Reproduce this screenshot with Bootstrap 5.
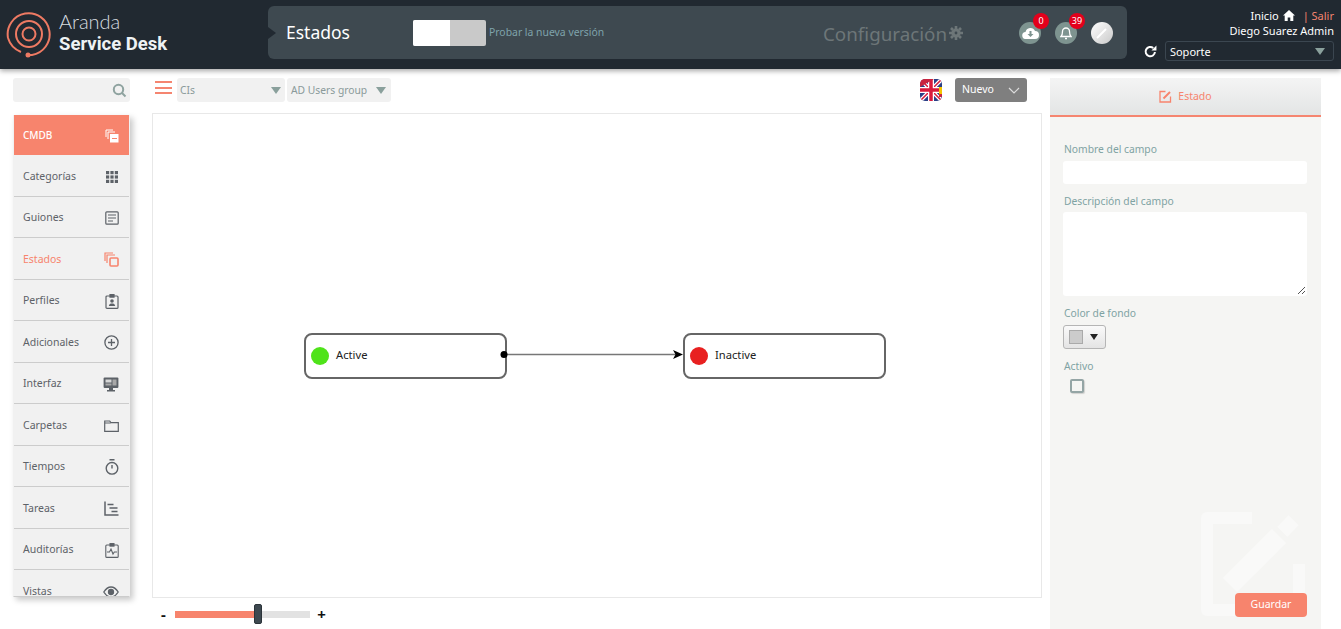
<!DOCTYPE html>
<html lang="es">
<head>
<meta charset="utf-8">
<title>Estados</title>
<link href="https://cdn.jsdelivr.net/npm/bootstrap@5.3.0/dist/css/bootstrap.min.css" rel="stylesheet">
<style>
html,body{height:100%;}
body{margin:0;overflow:hidden;background:#fff;font-family:"Noto Sans","Open Sans",sans-serif;font-size:11px;color:#555;}
.top-bar{height:69px;background:#212931;box-shadow:0 2px 5px rgba(0,0,0,.35);position:relative;z-index:5;padding-left:6px;}
.logo-box{width:262px;gap:7px;}
.logo-text{color:#fff;padding-bottom:5px;}
.logo-a{font-size:20px;line-height:23px;font-weight:300;color:#d8dde0;font-family:Lato,"Open Sans",sans-serif;}
.logo-b{font-size:18.5px;line-height:22px;font-weight:700;font-family:Roboto,"Noto Sans",sans-serif;color:#eef2f4;}
.title-panel{width:859px;height:53px;margin-top:6px;background:#3e4950;border-radius:6px;position:relative;padding-left:18px;}
.title-panel::before{content:"";position:absolute;left:0;top:21px;border-left:8px solid #212931;border-top:6px solid transparent;border-bottom:6px solid transparent;}
.title-text{font-size:17.5px;color:#fff;width:127px;}
.toggle-box{width:73px;height:26px;border-radius:2px;overflow:hidden;background:#c9c9c9;}
.toggle-on{width:37px;background:#fff;}
.try-text{font-size:10.4px;color:#7fa3ab;margin-left:3px;width:334px;}
.config-text{font-size:18.8px;color:#6d7678;width:126px;padding-top:4px;}
.round-icon{width:22px;height:22px;border-radius:50%;background:#7e9490;position:relative;}
.icon-slot{margin-left:14px;}
.icon-first{margin-left:56px;}
.round-white{background:linear-gradient(135deg,#fff,#c9c9c9);}
.red-badge{position:absolute;top:-9px;left:14px;min-width:16px;height:16px;border-radius:50%;background:#e3001b;color:#fff;font-size:9px;line-height:16px;text-align:center;}
.user-box{width:190px;margin-left:17px;padding-top:8px;color:#fff;text-align:right;line-height:15px;}
.user-box .sep{color:#f58570;}
.role-select{width:170px;height:20px;border:1px solid #3b4650;border-radius:3px;padding-left:4px;font-size:11px;text-align:left;line-height:19px;}
.tri{width:0;height:0;border-left:5px solid transparent;border-right:5px solid transparent;border-top:7px solid #8aa09c;}
.role-row{margin-top:3px;}
.content-area{height:560px;}
.side-col{width:117px;margin-left:13px;padding-top:9px;}
.search-box{height:24px;background:#f1f1f1;border-radius:3px;padding-right:3px;}
.menu-wrap{margin-top:13px;height:482px;overflow:hidden;box-shadow:3px 3px 6px rgba(0,0,0,.22);background:#f1f1f1;border-left:1px solid #f1f1f1;border-right:1px solid #f1f1f1;border-bottom:1px solid #ccc;width:117px;}
.menu-line{height:41.5px;border-bottom:1.5px solid #ccc;padding:3px 10px 0 9px;color:#5d6268;font-size:10.5px;}
.menu-line.is-head{background:#f7846d;color:#fff;font-weight:500;height:40px;border-bottom:0;font-size:10px;padding-top:1px;}
.menu-line.is-active{color:#f7846d;}
.main-col{width:890px;margin-left:22px;padding-top:9px;}
.tool-row{height:24px;}
.burger{width:17px;margin:3px 5px 0 3px;height:13px;border-top:2px solid #f58570;border-bottom:2px solid #f58570;position:relative;align-self:flex-start;}
.burger::after{content:"";position:absolute;left:0;right:0;top:3.5px;height:2px;background:#f58570;}
.gray-select{height:24px;background:#f1f1f1;border-radius:3px;padding:1px 4px 0 3px;color:#8a9a9a;font-size:10.3px;margin-right:2px;}
.sel-a{width:108px;}
.sel-b{width:104px;padding-left:4px;padding-right:5px;}
.flag-box{width:22px;height:22px;border-radius:5px;overflow:hidden;margin-right:13px;}
.new-btn{width:72px;height:24px;background:#7f7f7f;border-radius:3px;color:#fff;font-size:10.5px;padding:0 7px;margin-right:15px;}
.canvas-box{height:485px;margin-top:11px;border:1px solid #e8e8e8;position:relative;}
.node-box{position:absolute;top:219px;width:202.5px;height:45.5px;border:2px solid #666;border-radius:8px;background:#fff;padding-left:5px;gap:7px;color:#222;font-size:11.2px;}
.node-dot{width:18px;height:18px;border-radius:50%;}
.link-svg{position:absolute;left:0;top:0;}
.zoom-row{height:33px;}
.zoom-sign{width:23px;text-align:center;color:#111;font-size:15px;font-weight:700;}
.zoom-track{width:135px;height:7px;background:#e2e2e2;position:relative;}
.zoom-fill{height:7px;background:#f7846d;}
.zoom-thumb{position:absolute;top:-7px;left:79px;width:8px;height:20px;background:#3e4950;border:1px solid #2c343a;border-radius:2px;}
.right-col{width:271px;margin-left:8px;margin-top:9px;background:#f5f5f3;position:relative;padding:0 14px 0 13px;}
.right-head{height:39px;margin:0 -14px 0 -13px;background:linear-gradient(#f4f4f4,#e3e5e5);border-bottom:2px solid #f58570;color:#f7846d;gap:6px;font-size:10.5px;}
.field-label{color:#7fa3a3;font-size:10.3px;line-height:14px;margin-left:1px;}
.field-input{height:23px;background:#fff;border-radius:3px;margin-top:5px;}
.field-area{height:84px;background:#fff;border-radius:3px;position:relative;margin-top:4px;}
.grip{position:absolute;right:1px;bottom:1px;}
.picker{width:43px;height:24px;border:1px solid #b5b5b5;border-radius:3px;background:linear-gradient(#fafafa,#e4e4e4);gap:7px;padding-left:5px;margin-top:5px;}
.swatch{width:14px;height:14px;background:#ccc;border:1px solid #aaa;}
.tri-dark{width:0;height:0;border-left:4px solid transparent;border-right:4px solid transparent;border-top:6px solid #222;}
.check-box{width:14px;height:14px;border:2px solid #94a5a5;border-radius:2px;background:#f5f5f3;margin:6px 0 0 7px;box-shadow:1px 1px 1px rgba(0,0,0,.15);}
.save-btn{position:absolute;right:14px;bottom:12px;width:72px;height:24px;background:#f7846d;border:0;border-radius:4px;color:#fff;font-size:10.5px;padding:0;}
.mark-icon{position:absolute;left:151px;top:434px;}
.lab-first{margin-top:25px;}
.lab-next{margin-top:10px;}
.lab-last{margin-top:10px;}
</style>
</head>
<body>
<header class="top-bar d-flex">
  <div class="logo-box d-flex align-items-center">
    <svg width="46" height="50" viewBox="0 0 46 50" fill="none" stroke="#ee7a63">
      <circle cx="23" cy="24" r="6.500" stroke-width="2"/>
      <circle cx="23" cy="24" r="13" stroke-width="2"/>
      <path d="M2 28 A21 21 0 1 1 26 45 L22 45" stroke-width="2"/>
      <path d="M2 28 Q5 38 15 42" stroke-width="2"/>
      <circle cx="22" cy="45" r="2.500" fill="#ee7a63" stroke="none"/>
    </svg>
    <div class="logo-text">
      <div class="logo-a">Aranda</div>
      <div class="logo-b">Service Desk</div>
    </div>
  </div>
  <div class="title-panel d-flex align-items-center">
    <div class="title-text">Estados</div>
    <div class="toggle-box d-flex"><div class="toggle-on"></div></div>
    <div class="try-text">Probar la nueva versión</div>
    <div class="config-text">Configuración</div>
    <svg width="14" height="14" viewBox="0 0 14 14"><circle cx="7" cy="7" r="4.600" fill="#6d7678"/><circle cx="7" cy="7" r="1.400" fill="#3e4950"/><path d="M7 0v3M7 11v3M0 7h3M11 7h3M2 2l2 2M10 10l2 2M12 2l-2 2M4 10l-2 2" stroke="#6d7678" stroke-width="2.600"/></svg>
    <div class="round-icon icon-first d-flex align-items-center justify-content-center">
      <svg width="17" height="12" viewBox="0 0 17 12"><path d="M4 12a3.500 3.500 0 0 1-.5-7A5 5 0 0 1 13 4a4 4 0 0 1 0 8z" fill="#fff"/><path d="M7.500 4h2v3h2l-3 3-3-3h2z" fill="#7e9490"/></svg>
      <span class="red-badge">0</span>
    </div>
    <div class="round-icon icon-slot d-flex align-items-center justify-content-center">
      <svg width="12" height="14" viewBox="0 0 12 14" fill="none" stroke="#fff" stroke-width="1.300"><path d="M1 10.500c1.300-1.300 1.500-2.500 1.500-5a3.500 3.500 0 0 1 7 0c0 2.500.2 3.700 1.500 5z"/><path d="M5 12.500h2"/></svg>
      <span class="red-badge">39</span>
    </div>
    <div class="round-icon round-white icon-slot d-flex align-items-center justify-content-center">
      <svg width="12" height="12" viewBox="0 0 12 12"><path d="M1 11 10 2" stroke="#fff" stroke-width="2"/></svg>
    </div>
  </div>
  <div class="user-box">
    <div class="d-flex justify-content-end align-items-center gap-1">
      <span>Inicio</span>
      <svg width="12" height="11" viewBox="0 0 12 11"><path d="M6 0 0 5.500h1.700V11h3V7.500h2.600V11h3V5.500H12z" fill="#fff"/></svg>
      <span class="sep ms-1">|&nbsp;Salir</span>
    </div>
    <div>Diego Suarez Admin</div>
    <div class="role-row d-flex justify-content-end align-items-center gap-2">
      <svg width="13" height="13" viewBox="0 0 13 13" fill="none" stroke="#fff" stroke-width="2"><path d="M11 7A4.700 4.700 0 1 1 9.300 3"/><path d="M12.500 .5v5h-5z" fill="#fff" stroke="none"/></svg>
      <div class="role-select d-flex align-items-center justify-content-between pe-2">Soporte<span class="tri"></span></div>
    </div>
  </div>
</header>
<div class="content-area d-flex">
  <aside class="side-col">
    <div class="search-box d-flex align-items-center justify-content-end">
      <svg width="15" height="15" viewBox="0 0 15 15" fill="none" stroke="#8fa3a0" stroke-width="2"><circle cx="6.500" cy="6.500" r="4.700"/><path d="m10 10 3.500 3.500"/></svg>
    </div>
    <nav class="menu-wrap">
      <div class="menu-line is-head d-flex align-items-center justify-content-between">CMDB
        <svg width="14" height="14" viewBox="0 0 14 14" fill="none" stroke="#fff"><path d="M1 8V1h7"/><path d="M3 10V3h7"/><rect x="5" y="5" width="8.500" height="8.500" fill="#fff" stroke="none"/><path d="M7 9.500h5" stroke="#f7846d"/></svg>
      </div>
      <div class="menu-line d-flex align-items-center justify-content-between">Categorías
        <svg width="14" height="14" viewBox="0 0 14 14" fill="#5d6268"><rect x="1" y="1" width="3.200" height="3.200"/><rect x="5.400" y="1" width="3.200" height="3.200"/><rect x="9.800" y="1" width="3.200" height="3.200"/><rect x="1" y="5.400" width="3.200" height="3.200"/><rect x="5.400" y="5.400" width="3.200" height="3.200"/><rect x="9.800" y="5.400" width="3.200" height="3.200"/><rect x="1" y="9.800" width="3.200" height="3.200"/><rect x="5.400" y="9.800" width="3.200" height="3.200"/><rect x="9.800" y="9.800" width="3.200" height="3.200"/></svg>
      </div>
      <div class="menu-line d-flex align-items-center justify-content-between">Guiones
        <svg width="14" height="14" viewBox="0 0 14 14" fill="none" stroke="#5d6268" stroke-width="1.200"><rect x=".8" y=".8" width="12.400" height="12.400" rx="1"/><path d="M3 4h8M3 7h8M3 10h5"/></svg>
      </div>
      <div class="menu-line is-active d-flex align-items-center justify-content-between">Estados
        <svg width="15" height="15" viewBox="0 0 15 15" fill="none" stroke="#f7846d" stroke-width="1.200"><path d="M1 9V1h8"/><path d="M3 11V3h8"/><rect x="6" y="6" width="8" height="8" rx="1" stroke-width="1.600"/></svg>
      </div>
      <div class="menu-line d-flex align-items-center justify-content-between">Perfiles
        <svg width="14" height="15" viewBox="0 0 14 15" fill="none" stroke="#5d6268" stroke-width="1.200"><rect x="1" y="2" width="12" height="12.400" rx="1"/><rect x="5" y=".6" width="4" height="2.500" fill="#5d6268"/><circle cx="7" cy="7" r="1.800" fill="#5d6268" stroke="none"/><path d="M3.800 12c.4-2 1.600-2.400 3.200-2.400s2.800.4 3.200 2.400z" fill="#5d6268" stroke="none"/></svg>
      </div>
      <div class="menu-line d-flex align-items-center justify-content-between">Adicionales
        <svg width="15" height="15" viewBox="0 0 15 15" fill="none" stroke="#5d6268" stroke-width="1.300"><circle cx="7.500" cy="7.500" r="6.600"/><path d="M7.500 4v7M4 7.500h7"/></svg>
      </div>
      <div class="menu-line d-flex align-items-center justify-content-between">Interfaz
        <svg width="16" height="15" viewBox="0 0 16 15"><rect x=".6" y=".6" width="14.800" height="10.500" rx="1" fill="#5d6268"/><rect x="2.500" y="2.500" width="6" height="3" fill="#d8d8d8"/><rect x="9.500" y="2.500" width="4" height="6" fill="#a8a8a8"/><rect x="2.500" y="6.500" width="6" height="2" fill="#a8a8a8"/><path d="M6 11h4v2h2v1.500H4V13h2z" fill="#5d6268"/></svg>
      </div>
      <div class="menu-line d-flex align-items-center justify-content-between">Carpetas
        <svg width="15" height="12" viewBox="0 0 15 12" fill="none" stroke="#5d6268" stroke-width="1.200"><path d="M.7 11.300V1h5l1.200 1.700h7.400v8.600z"/><path d="M.7 3h6" stroke-width="1"/></svg>
      </div>
      <div class="menu-line d-flex align-items-center justify-content-between">Tiempos
        <svg width="14" height="16" viewBox="0 0 14 16" fill="none" stroke="#5d6268" stroke-width="1.400"><circle cx="7" cy="9.300" r="5.800"/><path d="M4.500 .8h5M7 6v3.500"/></svg>
      </div>
      <div class="menu-line d-flex align-items-center justify-content-between">Tareas
        <svg width="15" height="15" viewBox="0 0 15 15" fill="none" stroke="#5d6268" stroke-width="1.500"><path d="M1 .5v13.500h13.500"/><path d="M3.500 3.500h6M5.500 7h8M7.500 10.500h6"/></svg>
      </div>
      <div class="menu-line d-flex align-items-center justify-content-between">Auditorías
        <svg width="14" height="15" viewBox="0 0 14 15" fill="none" stroke="#5d6268" stroke-width="1.100"><rect x=".8" y="2" width="12.400" height="12.400" rx="1"/><rect x="5" y=".6" width="4" height="2.500" fill="#5d6268"/><path d="M2 9h2.500l1.500-3 2 5 1.300-2H12"/></svg>
      </div>
      <div class="menu-line d-flex align-items-center justify-content-between">Vistas
        <svg width="16" height="12" viewBox="0 0 16 12" fill="none" stroke="#5d6268" stroke-width="1.300"><path d="M.8 6C3 2.500 5.300 1 8 1s5 1.500 7.200 5C13 9.500 10.700 11 8 11S3 9.500.8 6z"/><circle cx="8" cy="6" r="2.500" fill="#5d6268"/></svg>
      </div>
    </nav>
  </aside>
  <main class="main-col">
    <div class="tool-row d-flex align-items-center">
      <span class="burger"></span>
      <div class="gray-select sel-a d-flex align-items-center justify-content-between">CIs<span class="tri"></span></div>
      <div class="gray-select sel-b d-flex align-items-center justify-content-between">AD Users group<span class="tri"></span></div>
      <div class="ms-auto flag-box">
        <svg width="22" height="22" viewBox="0 0 22 22"><rect width="22" height="22" fill="#2b3f86"/><path d="M0 0 22 22M22 0 0 22" stroke="#fff" stroke-width="4"/><path d="M0 0 22 22M22 0 0 22" stroke="#d8193b" stroke-width="1.500"/><path d="M11 0v22M0 11h22" stroke="#fff" stroke-width="6"/><path d="M11 0v22M0 11h22" stroke="#d8193b" stroke-width="3.500"/><path d="M0 0h14L0 8z" fill="#c9243f"/><path d="M19 8h3v7h-3z" fill="#f5c400"/><path d="M19 15h3v3h-3z" fill="#c9243f"/></svg>
      </div>
      <div class="new-btn d-flex align-items-center justify-content-between">Nuevo
        <svg width="12" height="7" viewBox="0 0 12 7" fill="none" stroke="#ddd" stroke-width="1.200"><path d="m1 1 5 5 5-5"/></svg>
      </div>
    </div>
    <div class="canvas-box">
      <div class="node-box d-flex align-items-center" style="left:151px"><span class="node-dot" style="background:#4fe31a"></span>Active</div>
      <div class="node-box d-flex align-items-center" style="left:530px"><span class="node-dot" style="background:#e82020"></span>Inactive</div>
      <svg class="link-svg" width="888" height="483" viewBox="0 0 888 483">
        <path d="M352 240.500H526" stroke="#777" stroke-width="1.500" fill="none"/>
        <circle cx="351" cy="240.500" r="3.500" fill="#000"/>
        <path d="M530 240.500 520 236 522.500 240.500 520 245z" fill="#000"/>
      </svg>
    </div>
    <div class="zoom-row d-flex align-items-center">
      <span class="zoom-sign">-</span>
      <div class="zoom-track"><div class="zoom-fill" style="width:83px"></div><div class="zoom-thumb"></div></div>
      <span class="zoom-sign">+</span>
    </div>
  </main>
  <aside class="right-col">
    <div class="right-head d-flex align-items-center justify-content-center">
      <svg width="13" height="13" viewBox="0 0 13 13" fill="none" stroke="#f7846d" stroke-width="1.300"><path d="M6.500 1.500H1v10.500h10.500V6.500"/><path d="M4.500 8.500 11 2" stroke-width="2"/></svg>
      Estado
    </div>
    <div class="field-label lab-first">Nombre del campo</div>
    <div class="field-input"></div>
    <div class="field-label lab-next">Descripción del campo</div>
    <div class="field-area">
      <svg class="grip" width="9" height="9" viewBox="0 0 9 9" stroke="#555" stroke-width="1"><path d="M1 8 8 1M5 8 8 5"/></svg>
    </div>
    <div class="field-label lab-next">Color de fondo</div>
    <div class="picker d-flex align-items-center"><span class="swatch"></span><span class="tri-dark"></span></div>
    <div class="field-label lab-last">Activo</div>
    <div class="check-box"></div>
    <svg class="mark-icon" width="104" height="104" viewBox="0 0 104 104" fill="none" stroke="#f9f9f8" stroke-width="12" stroke-linejoin="round"><path d="M51 6H6v92h92V52"/><path d="M29 73 78 24" stroke-width="20"/><path d="M82 9 92 19" stroke-width="16"/></svg>
    <button class="save-btn">Guardar</button>
  </aside>
</div>
</body>
</html>
